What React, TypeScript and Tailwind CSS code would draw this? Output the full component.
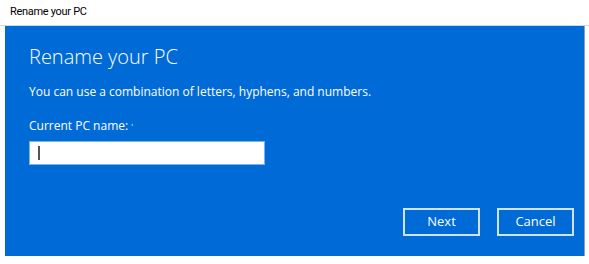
import React from "react";

export default function App() {
  return (
    <div className="w-[589px] h-[264px] bg-white font-['Open_Sans',sans-serif] overflow-hidden">
      <div className="h-[26px] pl-[10px] flex items-center text-[11px] tracking-[-0.3px] text-black border-b border-[#c9d9ea] font-['Roboto',sans-serif]">
        Rename your PC
      </div>
      <div className="ml-[5px] w-[580px] h-[230px] bg-[#006bd6] border-r border-[#8aa3bd] pl-[24px] pt-[18px] text-white flex flex-col">
        <h1 className="text-[20px] font-light leading-[26px]">Rename your PC</h1>
        <p className="mt-[14px] text-[12px] leading-[16px]">
          You can use a combination of letters, hyphens, and numbers.
        </p>
        <label className="mt-[18px] text-[12px] leading-[16px]">
          Current PC name: <span className="text-[8px] align-top">'</span>
        </label>
        <div className="mt-[7px] w-[236px] h-[24px] bg-white border border-[#7fb2e8] flex items-center pl-[8px]">
          <span className="w-[2px] h-[14px] bg-[#555]" />
        </div>
        <div className="flex justify-end gap-[17px] mt-[43px] pr-[10px]">
          <button className="w-[77px] h-[28px] border-2 border-[#cfe3f7] text-[13px] text-white">
            Next
          </button>
          <button className="w-[77px] h-[28px] border-2 border-[#cfe3f7] text-[13px] text-white">
            Cancel
          </button>
        </div>
      </div>
    </div>
  );
}
